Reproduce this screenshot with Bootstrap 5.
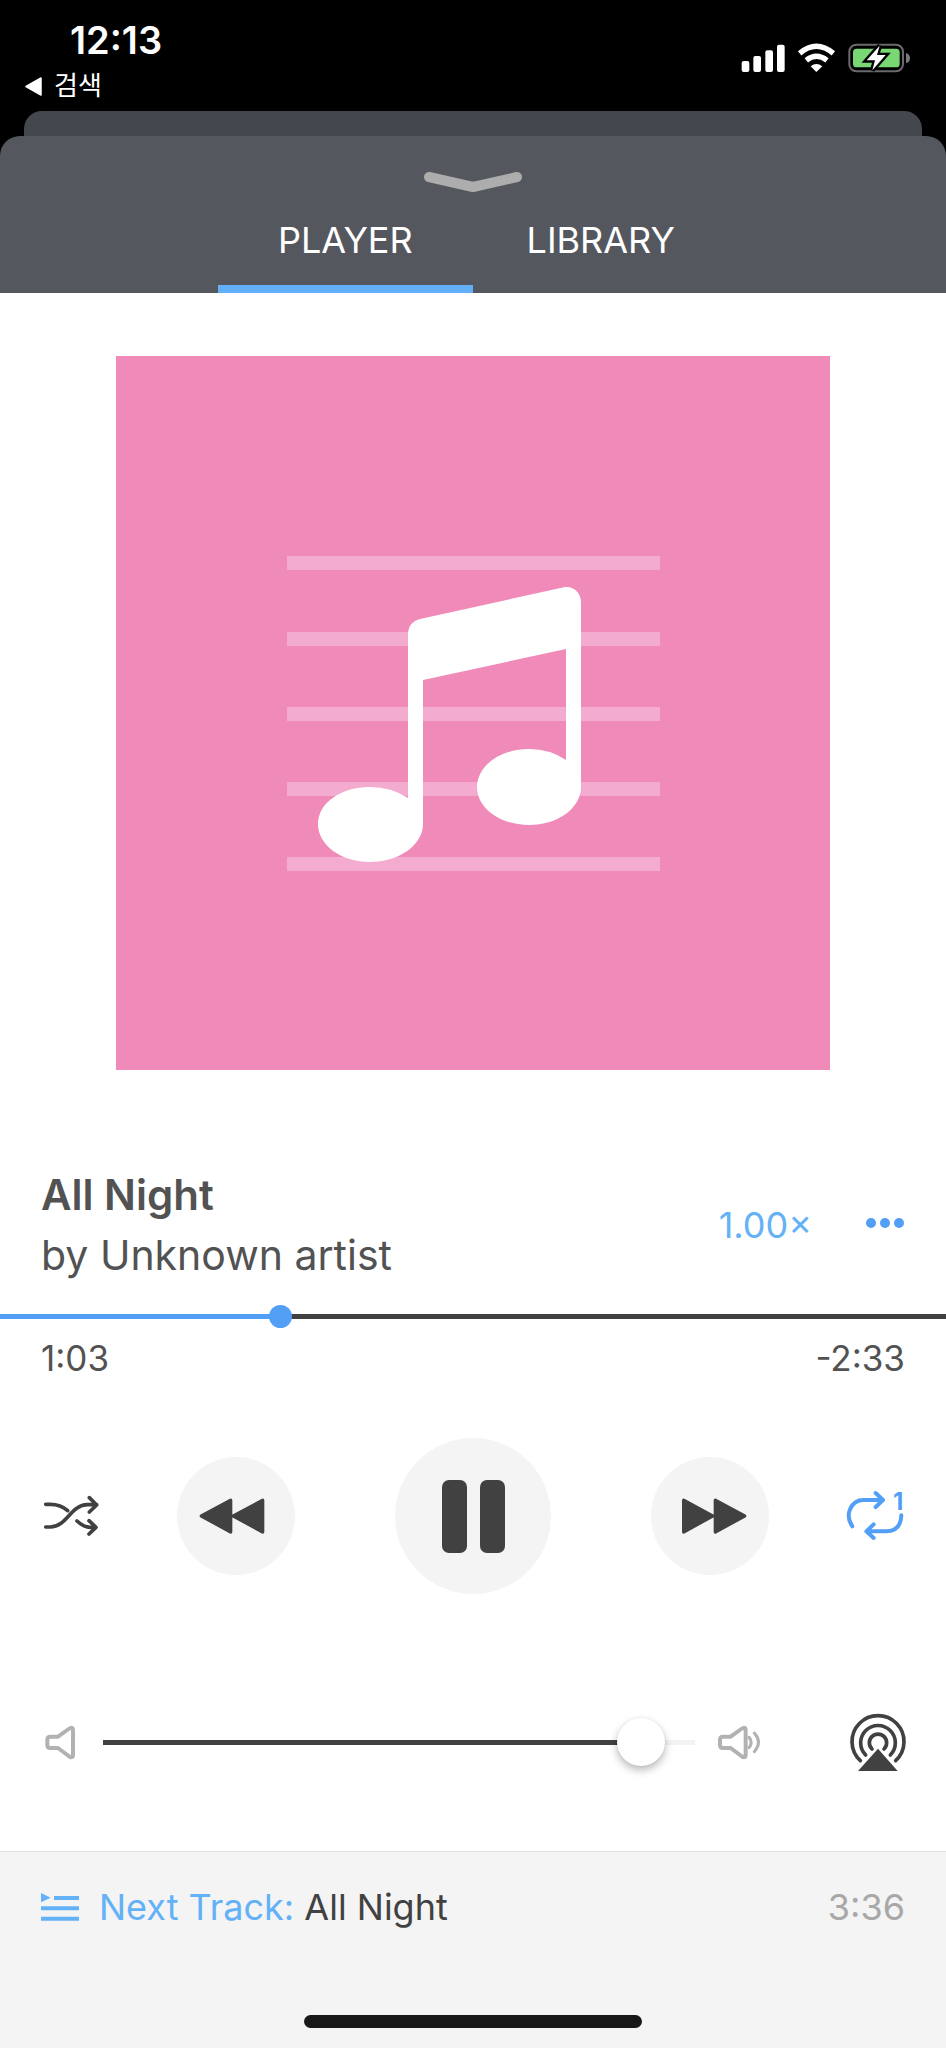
<!DOCTYPE html>
<html lang="en">
<head>
<meta charset="utf-8">
<meta name="viewport" content="width=device-width, initial-scale=1">
<title>Music player</title>
<link href="https://cdn.jsdelivr.net/npm/bootstrap@5.3.0/dist/css/bootstrap.min.css" rel="stylesheet">
<style>
  :root { --ink: #414141; --soft-ink: #525252; --sky: #63b1f7; --azure: #549ff6; --mist: #f4f4f4; }
  body { font-family: Inter, "Noto Sans CJK KR", sans-serif; background: #fff; color: var(--soft-ink); font-size: 36px; line-height: 48px; }
  svg { display: block; overflow: visible; }
  .edge { padding-left: 41px; padding-right: 41px; }
  .line-art { fill: none; stroke: currentColor; stroke-linecap: round; stroke-linejoin: round; }

  .status-bar { height: 111px; padding: 20px 35px 0 24px; }
  .status-icons { margin-top: 23px; }
  .clock { font-size: 38px; font-weight: 600; line-height: 40px; padding-left: 46px; }
  .back-link { font-size: 26px; line-height: 36px; margin-top: 8px; gap: 11px; }
  .sheet-behind { height: 45px; margin: 0 24px -20px; background: #44484e; border-radius: 18px 18px 0 0; }
  .sheet-head { position: relative; background: #54585e; border-radius: 20px 20px 0 0; padding-top: 34px; }
  .tab-link { width: 27%; padding: 24px 0 21px; line-height: 48px; border-bottom: 8px solid transparent; }
  .tab-link.active { border-color: #63b0f8; }

  .plain { border: 0; padding: 0; background: none; color: var(--ink); }
  .accent { color: var(--azure); }

  .artwork { margin: 63px 116px 94px; background: #f08ab9; }
  .track-title, .track-artist { line-height: 61px; }
  .track-title { font-size: 42px; font-weight: 600; }
  .track-artist { font-size: 41px; }
  .track-speed { color: var(--sky); margin-right: 53px; }
  .time { font-size: 35px; line-height: 40px; margin-top: 10px; }

  .slider { -webkit-appearance: none; appearance: none; display: block; width: 100%; margin: 0; height: var(--thumb);
    background: linear-gradient(to right, var(--done) calc(var(--thumb) / 2 + (100% - var(--thumb)) * var(--part)), var(--rest) 0) center / 100% 5px no-repeat; }
  .slider::-webkit-slider-thumb { -webkit-appearance: none; width: var(--thumb); height: var(--thumb); border-radius: 50%; background: var(--knob); box-shadow: var(--lift); }
  .seek { --thumb: 23px; --done: var(--azure); --rest: var(--ink); --knob: var(--azure); --lift: none; margin-top: 19px; }
  .volume { --thumb: 48px; --done: var(--ink); --rest: #f3f3f3; --knob: #fff; --lift: 0 4px 9px rgba(0,0,0,.28), 0 0 2px rgba(0,0,0,.08); }

  .round { border-radius: 50%; background: var(--mist); display: grid; place-items: center; width: 118px; height: 118px; }
  .round-lg { width: 156px; height: 156px; }
  .transport { margin-top: 60px; }
  .transport-main { gap: 100px; }
  .volume-row { margin: 119px 0 80px; gap: 23px; }
  .airplay { margin-left: 62px; }
  .next-bar { background: var(--mist); border-top: 1px solid #e3e3e3; padding-top: 31px; }
  .next-text { padding-left: 20px; color: var(--ink); }
  .next-text a { color: var(--sky); }
  .next-time { color: #a8a8a8; }
  .home-bar { width: 338px; height: 13px; border-radius: 7px; background: #181818; margin-bottom: 20px; }
</style>
</head>
<body class="d-flex flex-column min-vh-100">

<div class="bg-black text-white">
  <div class="status-bar d-flex justify-content-between align-items-start">
    <div>
      <div class="clock">12:13</div>
      <a href="#" class="back-link d-flex align-items-center text-white text-decoration-none">
        <svg width="19" height="19" viewBox="0 0 19 19" fill="#fff" aria-hidden="true"><path d="M17 1v17L2 9.500z" stroke="#fff" stroke-width="1.500" stroke-linejoin="round"/></svg>검색</a>
    </div>
    <svg class="status-icons" width="170" height="30" viewBox="804 129 510 90" role="img" aria-label="Signal, Wi-Fi and charging battery">
      <g fill="#fff">
        <rect x="806" y="183" width="23" height="33" rx="6"/><rect x="841" y="168" width="23" height="48" rx="6"/>
        <rect x="877" y="151" width="23" height="65" rx="6"/><rect x="912" y="134" width="23" height="82" rx="6"/>
        <path d="M1030 216L1013 199Q1030 185 1048 199z"/>
      </g>
      <g fill="none" stroke="#fff" stroke-width="16"><path d="M980 160Q1030 118 1081 160"/><path d="M1000 181Q1030 157 1062 181"/></g>
      <rect x="1129" y="134" width="161" height="80" rx="21" fill="none" stroke="#6a6a6c" stroke-width="6"/>
      <path d="M1299 159q12 4 12 16t-12 14z" fill="#7a7a7c"/>
      <rect x="1140" y="146" width="140" height="56" rx="11" fill="#79d774"/>
      <path d="M1220 137L1181 181H1206L1198 211L1238 165H1212z" fill="#fff" stroke="#000" stroke-width="14" paint-order="stroke"/>
    </svg>
  </div>
  <div class="sheet-behind"></div>
  <header class="sheet-head">
    <button type="button" class="plain d-block mx-auto" aria-label="Close player">
      <svg width="100" height="22" viewBox="0 0 100 22" color="#adadad"><path class="line-art" d="M6 7L50 17L94 7" stroke-width="10"/></svg>
    </button>
    <nav class="d-flex justify-content-center text-center">
      <a href="#" class="tab-link active text-white text-decoration-none" aria-current="page">PLAYER</a>
      <a href="#" class="tab-link text-white text-decoration-none">LIBRARY</a>
    </nav>
  </header>
</div>

<main>
  <div class="artwork">
    <svg class="w-100" viewBox="0 0 714 714" role="img" aria-label="Album artwork">
      <path fill="#f3abcf" d="M171 200h373v14H171zM171 276h373v14H171zM171 351h373v14H171zM171 426h373v14H171zM171 501h373v14H171z"/>
      <path fill="#fff" d="M292 279Q292 266 304 263L449 231C458 230 465 237 465 246V431C465 452 442 469 413 469S361 452 361 431S384 393 413 393Q434 393 450 404V293L307 324V468C307 489 283 506 254 506S202 489 202 468S225 431 254 431Q275 431 292 442z"/>
    </svg>
  </div>

  <section class="edge d-flex justify-content-between align-items-center">
    <div>
      <h1 class="track-title mb-0">All Night</h1>
      <div class="track-artist">by Unknown artist</div>
    </div>
    <div class="d-flex align-items-center">
      <button type="button" class="plain track-speed" aria-label="Playback speed 1.00×">1.00×</button>
      <button type="button" class="plain accent" aria-label="More">
        <svg width="40" height="16" viewBox="0 0 40 16" fill="currentColor"><circle cx="6" cy="6" r="5"/><circle cx="20" cy="6" r="5"/><circle cx="34" cy="6" r="5"/></svg>
      </button>
    </div>
  </section>

  <input type="range" class="slider seek" aria-label="Position in track" min="0" max="216" value="63" style="--part:.2917">
  <div class="edge time d-flex justify-content-between"><span>1:03</span><span>-2:33</span></div>

  <div class="edge transport d-flex justify-content-between align-items-center">
    <button type="button" class="plain" aria-label="Shuffle">
      <svg width="58" height="58" viewBox="123 201 174 174"><path class="line-art" stroke-width="11" d="M137 253h14Q182 253 203 272M137 321h14C200 321 212 254 262 254h28M268 233l22 22-22 21M231 303Q251 321 270 322h18M267 302l21 20-21 20"/></svg>
    </button>
    <div class="transport-main d-flex align-items-center">
      <button type="button" class="plain round" aria-label="Previous track">
        <svg width="74" height="36" viewBox="596 234 222 108" fill="currentColor" stroke="currentColor" stroke-width="10" stroke-linejoin="round"><path d="M603 288L691 241V336zM699 288L787 241V336z"/></svg>
      </button>
      <button type="button" class="plain round round-lg" aria-label="Pause">
        <svg width="63" height="73" viewBox="0 0 63 73" fill="currentColor"><rect width="25" height="73" rx="7"/><rect x="38" width="25" height="73" rx="7"/></svg>
      </button>
      <button type="button" class="plain round" aria-label="Next track">
        <svg width="74" height="36" viewBox="604 234 222 108" fill="currentColor" stroke="currentColor" stroke-width="10" stroke-linejoin="round"><path d="M819 288L731 241V336zM723 288L636 241V336z"/></svg>
      </button>
    </div>
    <button type="button" class="plain accent" aria-label="Repeat one track">
      <svg width="58" height="58" viewBox="51 51 174 174"><path class="line-art" stroke-width="12" d="M67 169C42 133 65 90 100 90H158M137 69l22 21-22 21M214 136Q212 184 168 184H110M131 163l-22 21 22 20"/><text x="189" y="120" font-size="72" font-weight="700" fill="currentColor">1</text></svg>
    </button>
  </div>

  <div class="edge volume-row d-flex align-items-center">
    <svg width="39" height="35" viewBox="123 105 117 105" class="flex-shrink-0" color="#b2b2b2" aria-hidden="true"><path class="line-art" stroke-width="12" d="M142 149q0-9 9-9h23L206 117Q219 108 219 121V194Q219 207 206 198L174 174H151q-9 0-9-9z"/></svg>
    <input type="range" class="slider volume" aria-label="Volume" min="0" max="1000" value="945" style="--part:.945">
    <svg width="44" height="35" viewBox="735 105 132 105" class="flex-shrink-0" color="#b2b2b2" aria-hidden="true"><path class="line-art" stroke-width="12" d="M741 149q0-9 9-9h23L805 117Q818 108 818 121V194Q818 207 805 198L773 174H750q-9 0-9-9z"/><path class="line-art" stroke-width="9" d="M828 142Q841 157 828 173M844 129Q869 157 844 185"/></svg>
    <button type="button" class="plain airplay flex-shrink-0" aria-label="AirPlay">
      <svg width="58" height="58" viewBox="1122 69 174 174"><path class="line-art" stroke-width="11" d="M1162 212A78 78 0 1 1 1268 212M1178 195A52 52 0 1 1 1252 195M1197 177A26 26 0 1 1 1233 177"/><path fill="currentColor" d="M1215 176L1155 243H1274z"/></svg>
    </button>
  </div>
</main>

<footer class="next-bar flex-grow-1 d-flex flex-column justify-content-between">
  <div class="edge d-flex align-items-center">
    <svg width="38" height="34" viewBox="120 600 114 102" color="#63b1f7" aria-hidden="true"><path fill="currentColor" d="M120 609L149 623L120 637zM159 618h75v12h-75zM120 649h114v12H120zM120 680h114v12H120z"/></svg>
    <div class="next-text flex-grow-1"><a href="#" class="text-decoration-none">Next Track:</a> All Night</div>
    <span class="next-time">3:36</span>
  </div>
  <div class="home-bar mx-auto"></div>
</footer>

<script src="https://cdn.jsdelivr.net/npm/bootstrap@5.3.0/dist/js/bootstrap.bundle.min.js"></script>
</body>
</html>
